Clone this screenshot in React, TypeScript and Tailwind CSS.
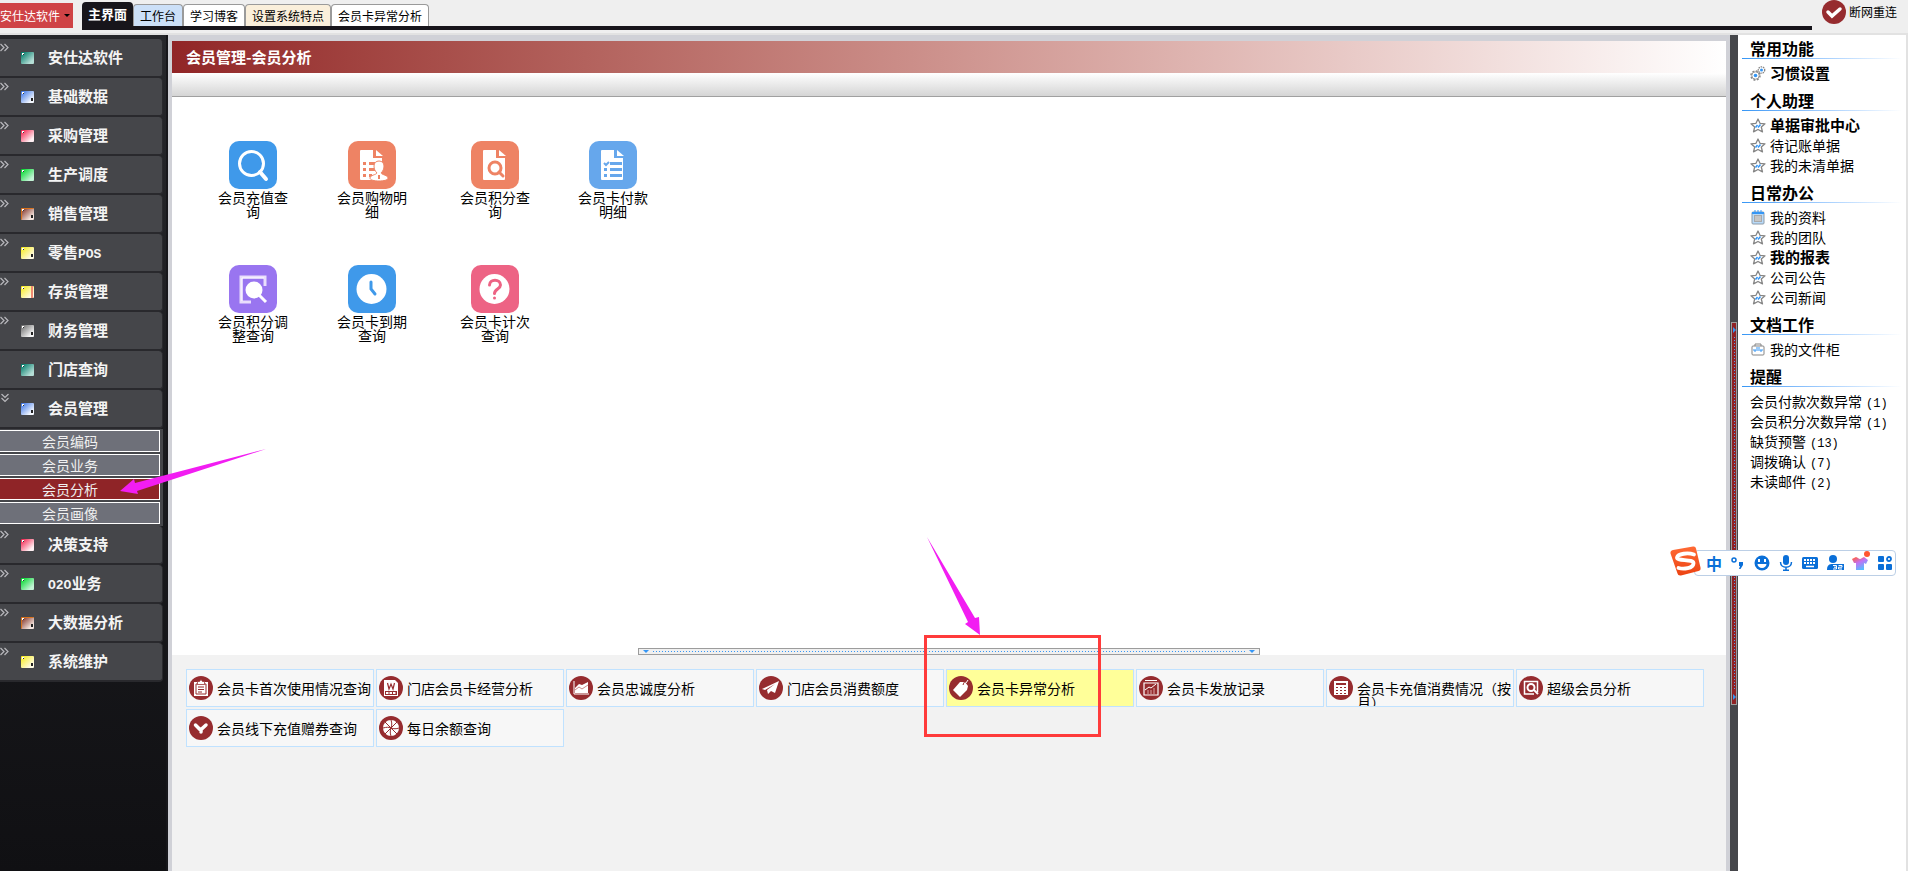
import clsx from "clsx";
import React, { useState } from "react";

interface MenuItem {
  label: string;
  color: string;
  mark?: "dot" | "bar";
  expandable?: boolean;
}

const FONT = "font-['Noto_Sans_CJK_SC','Liberation_Sans',sans-serif]";

const tabs = [
  { label: "工作台", bg: "bg-[#cce0f8]" },
  { label: "学习博客", bg: "bg-white" },
  { label: "设置系统特点", bg: "bg-[#faefdb]" },
  { label: "会员卡异常分析", bg: "bg-white" },
];

const menuTop: MenuItem[] = [
  { label: "安仕达软件", color: "teal", expandable: true },
  { label: "基础数据", color: "blue", mark: "dot", expandable: true },
  { label: "采购管理", color: "red", expandable: true },
  { label: "生产调度", color: "green", expandable: true },
  { label: "销售管理", color: "brown", mark: "dot", expandable: true },
  { label: "零售POS", color: "yellow", mark: "dot", expandable: true },
  { label: "存货管理", color: "yellow", mark: "bar", expandable: true },
  { label: "财务管理", color: "gray", mark: "dot", expandable: true },
  { label: "门店查询", color: "teal" },
];

const menuBottom: MenuItem[] = [
  { label: "决策支持", color: "red", expandable: true },
  { label: "O2O业务", color: "green", expandable: true },
  { label: "大数据分析", color: "brown", mark: "dot", expandable: true },
  { label: "系统维护", color: "yellow", mark: "dot", expandable: true },
];

const subMenu = ["会员编码", "会员业务", "会员分析", "会员画像"];

const cubeColors: Record<string, [string, string]> = {
  teal: ["#007a68", "#b5ded6"],
  blue: ["#3f78e8", "#f4f8ff"],
  red: ["#f3244f", "#fff0f3"],
  green: ["#00d92c", "#c3f3d6"],
  brown: ["#7d2d22", "#f4e6e0"],
  yellow: ["#f7ec20", "#fffbe4"],
  gray: ["#6e6e6e", "#f4f4f4"],
};

const Cube = ({ color, mark }: { color: string; mark?: "dot" | "bar" }) => {
  const [from, to] = cubeColors[color];
  return (
    <svg width="13" height="12" viewBox="0 0 13 12" className="shrink-0">
      <defs>
        <linearGradient id={`cube-${color}`} x1="0" y1="0" x2="1" y2="1">
          <stop offset="0.05" stopColor={from} />
          <stop offset="0.8" stopColor={to} />
        </linearGradient>
      </defs>
      <rect width="13" height="12" rx="1" fill={`url(#cube-${color})`} />
      {color === "brown" && (
        <path d="M0.5 11.5V0.5h12" fill="none" stroke="#d9731c" />
      )}
      <path d="M1 1h2v1h-1v1h-1z" fill="#fff" />
      <path d="M2 2h1v1h-1z" fill="#333" />
      {mark === "dot" && <rect x="10" y="7" width="2" height="3" fill="#222" />}
      {mark === "bar" && <rect x="10" width="2" height="12" fill="#f08a72" />}
    </svg>
  );
};

const Chevrons = ({ down }: { down?: boolean }) => (
  <svg
    width="10"
    height="9"
    viewBox="0 0 10 9"
    className={clsx("absolute left-0 top-1", down && "rotate-90")}
  >
    <path
      d="M0.5 1l3.5 3.5L0.5 8M4.500 1l3.500 3.500L4.500 8"
      fill="none"
      stroke="#b9b9bd"
      strokeWidth="1.2"
    />
  </svg>
);

const MenuLabel = ({ text }: { text: string }) => (
  <span>
    {text.split(/([A-Z0-9]+)/).map((part, index) =>
      /^[A-Z0-9]+$/.test(part) ? (
        <span key={index} className="font-['Liberation_Mono',monospace] text-[13px]">
          {part}
        </span>
      ) : (
        part
      )
    )}
  </span>
);

const MenuRow = ({ item, open }: { item: MenuItem; open?: boolean }) => (
  <button className="relative flex h-[39px] w-[163px] items-center gap-[14px] rounded-r-sm border-b-2 border-r border-[#29292d] bg-[#45464a] pl-[21px] text-[15px] font-bold text-[#f4f4f4]">
    {(item.expandable || open) && <Chevrons down={open} />}
    <Cube color={item.color} mark={item.mark} />
    <MenuLabel text={item.label} />
  </button>
);

const Sidebar = () => {
  const [active, setActive] = useState("会员分析");
  return (
    <nav className="w-[168px] shrink-0 border-r-2 border-[#17171b] bg-linear-to-b from-[#26272b] to-[#101013] pt-1">
      {menuTop.map((item) => (
        <MenuRow key={item.label} item={item} />
      ))}
      <MenuRow item={{ label: "会员管理", color: "blue", mark: "dot" }} open />
      <div className="flex w-[163px] flex-col gap-[2px] bg-[#45464a] pb-[2px] pt-px">
        {subMenu.map((label) => (
          <button
            key={label}
            onClick={() => setActive(label)}
            className={clsx(
              "h-[22px] w-[160px] border border-l-0 border-white pl-[42px] text-left text-sm leading-5 text-[#f0f0f0]",
              label === active ? "bg-[#8f2427]" : "bg-[#6e7079]"
            )}
          >
            {label}
          </button>
        ))}
      </div>
      {menuBottom.map((item) => (
        <MenuRow key={item.label} item={item} />
      ))}
    </nav>
  );
};

const FileShape = () => (
  <>
    <path d="M13 9h12v8h9v21a1 1 0 0 1-1 1H13a1 1 0 0 1-1-1V10a1 1 0 0 1 1-1z" fill="#fff" />
    <path d="M28 9l7 6h-7z" fill="#fff" />
  </>
);

const tiles: { label: string; bg: string; icon: React.ReactNode }[] = [
  {
    label: "会员充值查询",
    bg: "bg-[#3f99ea]",
    icon: (
      <g fill="none" stroke="#fff">
        <circle cx="22.500" cy="22.500" r="12" strokeWidth="3" />
        <path d="M31 31l6 7" strokeWidth="4" strokeLinecap="round" />
      </g>
    ),
  },
  {
    label: "会员购物明细",
    bg: "bg-[#ee8364]",
    icon: (
      <>
        <FileShape />
        <path
          d="M15 21h3v3h-3zM15 27h3v3h-3zM15 33h3v3h-3zM21 21h6v3h-6zM21 27h6v3h-6zM21 33h3v3h-3z"
          fill="#ee8364"
        />
        <path
          d="M31 20c-3 0-5 2-5 5 0 3 1 5 3 7-1 2-7 2-7 5 0 2 4 3 9 3s9-1 9-3c0-3-6-3-7-5 2-2 3-4 3-7 0-3-2-5-5-5z"
          fill="#fff"
          stroke="#ee8364"
        />
        <path d="M31 34v4" stroke="#ee8364" strokeWidth="2" />
      </>
    ),
  },
  {
    label: "会员积分查询",
    bg: "bg-[#ee8364]",
    icon: (
      <>
        <FileShape />
        <g fill="none" stroke="#ee8364">
          <circle cx="24" cy="27" r="6" strokeWidth="3" />
          <path d="M28 31l4 4" strokeWidth="3" strokeLinecap="round" />
        </g>
      </>
    ),
  },
  {
    label: "会员卡付款明细",
    bg: "bg-[#66a7ec]",
    icon: (
      <>
        <FileShape />
        <path
          d="M21 21h12v3H21zM21 27h12v3H21zM21 33h12v3H21zM15 27h3v3h-3zM15 33h3v3h-3z"
          fill="#66a7ec"
        />
        <path d="M15 22l2 2 3-3" fill="none" stroke="#66a7ec" strokeWidth="2" />
      </>
    ),
  },
  {
    label: "会员积分调整查询",
    bg: "bg-[#9975f0]",
    icon: (
      <>
        <path d="M22 37H12V12h24v9" fill="none" stroke="#e9defc" strokeWidth="3" />
        <path d="M13 36V13h22" fill="none" stroke="#fff" />
        <circle cx="25" cy="25" r="8.500" fill="#fff" />
        <path d="M30 30l7 7" stroke="#fff" strokeWidth="3" />
      </>
    ),
  },
  {
    label: "会员卡到期查询",
    bg: "bg-[#3f99ea]",
    icon: (
      <>
        <circle cx="23.500" cy="24" r="15" fill="#fff" />
        <path
          d="M23 17v7l4 5"
          fill="none"
          stroke="#3f99ea"
          strokeWidth="3"
          strokeLinecap="round"
        />
      </>
    ),
  },
  {
    label: "会员卡计次查询",
    bg: "bg-[#ed6384]",
    icon: (
      <>
        <circle cx="23.500" cy="24" r="15" fill="#fff" />
        <path
          d="M18.500 20c0-6.500 11-6.500 11 0 0 4-6 4-6 8.500"
          fill="none"
          stroke="#ed6384"
          strokeWidth="3"
          strokeLinecap="round"
        />
        <circle cx="23.500" cy="33" r="1.500" fill="#ed6384" />
      </>
    ),
  },
];

const cards: { label: string; icon: React.ReactNode }[] = [
  {
    label: "会员卡首次使用情况查询",
    icon: (
      <>
        <path d="M5 6h14v14H5z" fill="#fff" />
        <path d="M7 8h10v10H7z" fill="none" stroke="#962c2f" />
        <path d="M8.500 5.500h2l1.500-2 1.500 2h2v3h-7z" fill="#fff" stroke="#962c2f" strokeWidth="0.700" />
        <path d="M9 11h6M9 13.500h6M9 16h4" stroke="#962c2f" />
      </>
    ),
  },
  {
    label: "门店会员卡经营分析",
    icon: (
      <>
        <path d="M5 4h11l3 3v13H5z" fill="#fff" />
        <path d="M8.500 7l1.500 6 2-5 2 5 1.500-6" fill="none" stroke="#962c2f" strokeWidth="1.200" />
        <path d="M6 15h12v4H6z" fill="#962c2f" />
        <path d="M7 17h10" stroke="#fff" strokeWidth="2" strokeDasharray="2.500 1" />
      </>
    ),
  },
  {
    label: "会员忠诚度分析",
    icon: (
      <>
        <path d="M5 5v13h15" fill="none" stroke="#fff" />
        <path d="M6 12l4-4 3 1 6-3v11H6z" fill="#fff" />
        <path d="M6 14l4-3 3 2 6-4" fill="none" stroke="#c88" />
      </>
    ),
  },
  {
    label: "门店会员消费额度",
    icon: <path d="M3 13L20 5l-4 12-4-2-3 3-1-4 8-6-10 6z" fill="#fff" />,
  },
  {
    label: "会员卡异常分析",
    icon: (
      <>
        <path d="M4 14l7-8 5 0 3 4-1 4-7 7z" fill="#fff" />
        <path d="M14 9c1-3 2-4 4-5" fill="none" stroke="#962c2f" />
        <path d="M17 7l2-3" stroke="#fff" />
      </>
    ),
  },
  {
    label: "会员卡发放记录",
    icon: (
      <>
        <path d="M6 4.500h12" stroke="#fff" />
        <path d="M5 7h14v12H5z" fill="none" stroke="#fff" strokeWidth="1.200" />
        <path d="M6 14l4-3 2 1 5-4" fill="none" stroke="#fff" />
        <path d="M9 14v4M12 14v4M15 12v6" stroke="#d9a5a6" />
      </>
    ),
  },
  {
    label: "会员卡充值消费情况（按月）",
    icon: (
      <>
        <path d="M5 5h14v14H5z" fill="#fff" />
        <path
          d="M7 7h10v2H7zM7 11h2v1H7zM11 11h2v1h-2zM15 11h2v1h-2zM7 14h2v1H7zM11 14h2v1h-2zM15 14h2v1h-2zM7 17h2v1H7zM11 17h2v1h-2zM15 17h2v1h-2z"
          fill="#962c2f"
        />
      </>
    ),
  },
  {
    label: "超级会员分析",
    icon: (
      <g fill="none" stroke="#fff">
        <path d="M15 18H5.500V5.500h13V16" strokeWidth="1.500" />
        <circle cx="12" cy="11.500" r="3.500" strokeWidth="2" />
        <path d="M15 14l4 4" strokeWidth="2" />
      </g>
    ),
  },
  {
    label: "会员线下充值赠券查询",
    icon: (
      <path
        d="M6.500 9l5 5 5.500-5M12 14v2"
        fill="none"
        stroke="#fff"
        strokeWidth="3.500"
        strokeLinecap="round"
      />
    ),
  },
  {
    label: "每日余额查询",
    icon: (
      <>
        <circle cx="12" cy="12" r="8" fill="#fff" />
        <path
          d="M6 6l12 12M18 6L6 18M12 4c1 3 1 5 0 8s-1 5 0 8M4 12c4-1 5-1 8 0s5 1 8 0"
          fill="none"
          stroke="#962c2f"
        />
      </>
    ),
  },
];

const ModuleTiles = () => (
  <div className="grid flex-1 grid-cols-[119px_123px_118px_72px] content-start gap-y-[47px] bg-white pl-[45px] pt-11">
    {tiles.map((tile) => (
      <button key={tile.label} className="flex w-[72px] flex-col items-center gap-px">
        <span className={clsx("size-12 rounded-[10px]", tile.bg)}>
          <svg width="48" height="48" viewBox="0 0 48 48">
            {tile.icon}
          </svg>
        </span>
        <span className="w-[70px] break-all text-center text-sm leading-[14px]">
          {tile.label}
        </span>
      </button>
    ))}
  </div>
);

const Splitter = () => (
  <div className="flex justify-center bg-white">
    <div className="flex h-[7px] w-2/5 items-center gap-1 border border-[#9c9c9c] bg-[#f0f0f0] px-1">
      <span className="border-x-3 border-t-3 border-x-transparent border-t-[#3596f5]" />
      <span className="h-px flex-1 bg-[repeating-linear-gradient(90deg,#3596f5_0_1px,transparent_1px_3px)]" />
      <span className="border-x-3 border-t-3 border-x-transparent border-t-[#3596f5]" />
    </div>
  </div>
);

const ReportCards = () => {
  const [selected, setSelected] = useState("会员卡异常分析");
  return (
    <div className="grid h-[216px] grid-cols-[repeat(auto-fill,188px)] content-start gap-[2px] bg-[#f2f2f2] pl-[14px] pt-[14px]">
      {cards.map((card) => (
        <button
          key={card.label}
          onClick={() => setSelected(card.label)}
          className={clsx(
            "flex h-[38px] items-start gap-1 overflow-hidden border border-[#c0e2ff] pl-[2px] text-left",
            card.label === selected ? "bg-[#ffff99]" : "bg-[#f7f7f7]"
          )}
        >
          <svg width="24" height="24" viewBox="0 0 24 24" className="mt-[6px] shrink-0">
            <circle cx="12" cy="12" r="12" fill="#962c2f" />
            {card.icon}
          </svg>
          <span className="mt-[11px] w-[155px] shrink-0 break-all text-sm leading-[14px]">
            {card.label}
          </span>
        </button>
      ))}
    </div>
  );
};

const StarIcon = () => (
  <svg width="16" height="15" viewBox="0 0 16 15">
    <path
      d="M8 1l2 4.300 5 0.500-3.700 3.200 1.200 4.800L8 11.500l-4.500 2.300 1.200-4.800L1 5.800l5-0.500z"
      fill="#fff"
      stroke="#858585"
      strokeWidth="1.300"
      strokeLinejoin="round"
    />
    <path d="M5.500 9.500l2-2.500M8 9.500l2.500-3" stroke="#3596f5" strokeWidth="1.500" />
  </svg>
);

const GearIcon = () => (
  <svg width="16" height="15" viewBox="0 0 16 15" fill="none">
    <circle cx="5.500" cy="9.500" r="4.500" stroke="#858585" strokeWidth="1.500" strokeDasharray="2 1.500" />
    <circle cx="5.500" cy="9.500" r="3.700" stroke="#9a9a9a" />
    <circle cx="5.500" cy="9.500" r="1.800" fill="#3596f5" />
    <circle cx="11.500" cy="4" r="3.200" stroke="#858585" strokeWidth="1.300" strokeDasharray="1.500 0.800" />
    <circle cx="11.500" cy="4" r="1.500" fill="#3596f5" />
  </svg>
);

const NoteIcon = () => (
  <svg width="16" height="15" viewBox="0 0 16 15">
    <rect x="2" y="2" width="12" height="12" rx="1" fill="#b8daf9" stroke="#8d9aa6" />
    <path d="M2 3h12" stroke="#3596f5" strokeWidth="2" />
    <path d="M5 0v3M8 0v3M11 0v3" stroke="#3596f5" />
    <rect x="4.500" y="5.500" width="7" height="6" fill="#c6c6c6" stroke="#a9a9a9" />
  </svg>
);

const CaseIcon = () => (
  <svg width="16" height="15" viewBox="0 0 16 15" fill="none">
    <path d="M5 4V2h6v2" stroke="#858585" />
    <rect x="2" y="4" width="12" height="9" rx="1" stroke="#858585" />
    <path d="M3 8h10M6 6h4M5 8v2M11 8v2" stroke="#3596f5" />
  </svg>
);

interface PanelItem {
  label: string;
  bold?: boolean;
  icon?: React.ReactNode;
  count?: number;
}

const sections: { title: string; items: PanelItem[] }[] = [
  {
    title: "常用功能",
    items: [{ label: "习惯设置", bold: true, icon: <GearIcon /> }],
  },
  {
    title: "个人助理",
    items: [
      { label: "单据审批中心", bold: true, icon: <StarIcon /> },
      { label: "待记账单据", icon: <StarIcon /> },
      { label: "我的未清单据", icon: <StarIcon /> },
    ],
  },
  {
    title: "日常办公",
    items: [
      { label: "我的资料", icon: <NoteIcon /> },
      { label: "我的团队", icon: <StarIcon /> },
      { label: "我的报表", bold: true, icon: <StarIcon /> },
      { label: "公司公告", icon: <StarIcon /> },
      { label: "公司新闻", icon: <StarIcon /> },
    ],
  },
  {
    title: "文档工作",
    items: [{ label: "我的文件柜", icon: <CaseIcon /> }],
  },
  {
    title: "提醒",
    items: [
      { label: "会员付款次数异常", count: 1 },
      { label: "会员积分次数异常", count: 1 },
      { label: "缺货预警", count: 13 },
      { label: "调拨确认", count: 7 },
      { label: "未读邮件", count: 2 },
    ],
  },
];

const AssistantPanel = () => (
  <aside className="flex w-[170px] shrink-0 flex-col gap-[7px] border-r-2 border-[#e2e2e2] bg-white pl-1 pt-[3px]">
    {sections.map((section) => (
      <section key={section.title}>
        <h2 className="pl-2 text-base font-bold leading-5">{section.title}</h2>
        <div className="mb-1 h-px w-40 bg-linear-to-r from-[#3596f5] to-white" />
        <ul className="pl-2">
          {section.items.map((item) => (
            <li key={item.label}>
              <a
                href="#"
                className={clsx(
                  "flex h-5 items-center gap-1 whitespace-nowrap leading-5",
                  item.bold ? "text-[15px] font-bold" : "text-sm"
                )}
              >
                {item.icon}
                <span>
                  {item.label}
                  {item.count !== undefined && (
                    <span className="pl-1 font-['Liberation_Mono',monospace] text-xs leading-none">
                      ({item.count})
                    </span>
                  )}
                </span>
              </a>
            </li>
          ))}
        </ul>
      </section>
    ))}
  </aside>
);

const PanelSplitter = () => (
  <div className="w-2 shrink-0 bg-[#45464a] px-px pt-[287px]">
    <div className="flex h-[383px] w-[6px] flex-col items-center gap-1 border border-[#9c9c9c] bg-[#8f2225] py-1">
      <span className="border-y-3 border-l-3 border-y-transparent border-l-[#3596f5]" />
      <span className="w-px flex-1 bg-[repeating-linear-gradient(180deg,#5d9df0_0_1px,transparent_1px_3px)]" />
      <span className="border-y-3 border-l-3 border-y-transparent border-l-[#3596f5]" />
    </div>
  </div>
);

const ImeBar = () => (
  <div className="absolute right-3 top-[546px] flex h-[30px] items-end">
    <svg width="32" height="30" viewBox="0 0 32 30" className="relative z-10 -mr-2">
      <defs>
        <linearGradient id="ime-logo" x1="0" y1="0" x2="0" y2="1">
          <stop offset="0" stopColor="#ff6a35" />
          <stop offset="1" stopColor="#ec4312" />
        </linearGradient>
      </defs>
      <path
        d="M3 4L23 0.500q2.500-0.500 3 2l4.500 19q0.500 3-2 3.500L11 29.500q-3 0.500-3.500-2L0.500 7.500q-0.500-3 2.500-3.500z"
        fill="url(#ime-logo)"
      />
      <path
        d="M24 8.500c-6-2-16-1-17 3-0.500 4 17 1 16.500 6-0.500 5-10 6-15 4.500"
        fill="none"
        stroke="#fff"
        strokeWidth="3.800"
        strokeLinecap="round"
      />
    </svg>
    <div className="flex h-[26px] w-[202px] items-center gap-2 rounded-sm border border-[#bccfe6] bg-white pl-[11px] text-[#0a6fd8]">
      <span className="w-4 text-base font-bold leading-6">中</span>
      <svg width="16" height="16" viewBox="0 0 16 16">
        <circle cx="4" cy="5" r="2" fill="none" stroke="currentColor" strokeWidth="1.500" />
        <path d="M9 7h4v3l-2.500 4H9l1-3H9z" fill="currentColor" />
      </svg>
      <svg width="16" height="16" viewBox="0 0 16 16">
        <circle cx="8" cy="8" r="7.500" fill="currentColor" />
        <path d="M5 4v3M11 4v3" stroke="#fff" strokeWidth="2" />
        <path d="M3.500 9h9a4.500 4 0 0 1-9 0z" fill="#fff" />
      </svg>
      <svg width="16" height="16" viewBox="0 0 16 16">
        <rect x="5" y="0" width="6" height="10" rx="3" fill="currentColor" />
        <path d="M2.500 7c0 7 11 7 11 0M8 12v3M5 15.200h6" fill="none" stroke="currentColor" strokeWidth="1.500" />
      </svg>
      <svg width="16" height="16" viewBox="0 0 16 16">
        <rect x="0" y="2" width="16" height="12" rx="1.500" fill="currentColor" />
        <path d="M2 5h12M2 8h12" stroke="#fff" strokeWidth="2" strokeDasharray="2 1" />
        <path d="M4 11.500h8" stroke="#fff" strokeWidth="1.500" />
      </svg>
      <svg width="18" height="16" viewBox="0 0 18 16">
        <circle cx="7" cy="4" r="4" fill="currentColor" />
        <path d="M1 15c0-5 2-6 6-6h11v6z" fill="currentColor" />
        <path d="M7 10.500h3.500v3.500H7M8 12.200h2.500M12.500 10.500H16v1.700h-3.500V14H16" fill="none" stroke="#fff" />
      </svg>
      <svg width="18" height="20" viewBox="0 0 18 20" className="-mt-1">
        <defs>
          <linearGradient id="ime-shirt" x1="0" y1="0" x2="0.600" y2="1">
            <stop offset="0.1" stopColor="#ff5f4a" />
            <stop offset="0.500" stopColor="#c173f5" />
            <stop offset="1" stopColor="#4fc0ff" />
          </linearGradient>
        </defs>
        <path d="M4 6l2 1q2 2 4 0l2-1 4 3-2 4-2-1v7H4v-7l-2 0-2-4z" fill="url(#ime-shirt)" />
        <circle cx="15" cy="3" r="3" fill="#ff5630" />
      </svg>
      <svg width="14" height="14" viewBox="0 0 14 14" fill="currentColor">
        <rect width="6" height="6" rx="1" />
        <rect y="8" width="6" height="6" rx="1" />
        <rect x="8" y="8" width="6" height="6" rx="1" />
        <circle cx="11" cy="3" r="2" fill="none" stroke="currentColor" strokeWidth="1.800" />
      </svg>
    </div>
  </div>
);

// Pink pointers and the red frame that guide the reader through the steps
const Annotations = () => (
  <>
    <svg
      width="146"
      height="46"
      viewBox="0 0 146 46"
      className="pointer-events-none absolute left-[120px] top-[449px]"
    >
      <path d="M0 42L14 30 15 34 146 0 17 42 18 45z" fill="#f21df2" />
    </svg>
    <svg
      width="54"
      height="100"
      viewBox="0 0 54 100"
      className="pointer-events-none absolute left-[927px] top-[537px]"
    >
      <path d="M0 0L48 81 52 80 53 98 38 87 41 85z" fill="#f21df2" />
    </svg>
    <div className="pointer-events-none absolute left-[924px] top-[635px] h-[102px] w-[177px] border-3 border-[#ff3b3b]" />
  </>
);

const TopBar = () => (
  <header className="flex h-[35px] items-start border-b-2 border-[#e2e2e2] bg-[#efefef] text-xs">
    <button className="mt-[3px] flex h-[25px] w-[73px] items-center gap-1 bg-[#cf4346] text-white">
      安仕达软件
      <span className="border-x-3 border-t-3 border-x-transparent border-t-black" />
    </button>
    <div className="ml-[9px] flex h-[30px] flex-1 items-end border-b-4 border-[#17151b]">
      <button className="h-6 rounded-t-sm bg-[#17151b] px-[6px] text-[13px] font-bold text-white">
        主界面
      </button>
      {tabs.map((tab) => (
        <button
          key={tab.label}
          className={clsx(
            "h-[22px] rounded-t-sm border border-b-0 border-[#9a9a9a] px-[6px]",
            tab.bg
          )}
        >
          {tab.label}
        </button>
      ))}
    </div>
    <button className="ml-[10px] flex w-[86px] items-center gap-[3px]">
      <svg width="24" height="24" viewBox="0 0 24 24">
        <circle cx="12" cy="12" r="12" fill="#962c2f" />
        <path d="M6 12l4 4 8-7" fill="none" stroke="#fff" strokeWidth="3.500" strokeLinecap="round" />
      </svg>
      断网重连
    </button>
  </header>
);

const App = () => {
  return (
    <div className={clsx("relative flex min-h-screen flex-col overflow-hidden text-black", FONT)}>
      <TopBar />
      <div className="flex flex-1">
        <Sidebar />
        <main className="flex min-w-0 flex-1 flex-col border-x-4 border-t-[6px] border-[#d0d1d7]">
          <h1 className="h-8 bg-linear-to-r from-[#912527] to-white pl-[14px] text-[15px] font-bold leading-8 text-white">
            会员管理-会员分析
          </h1>
          <div className="h-6 border-b border-[#a0a0a0] bg-linear-to-b from-white to-[#d5d5d5]" />
          <ModuleTiles />
          <Splitter />
          <ReportCards />
        </main>
        <PanelSplitter />
        <AssistantPanel />
      </div>
      <ImeBar />
      <Annotations />
    </div>
  );
};

export default App;
